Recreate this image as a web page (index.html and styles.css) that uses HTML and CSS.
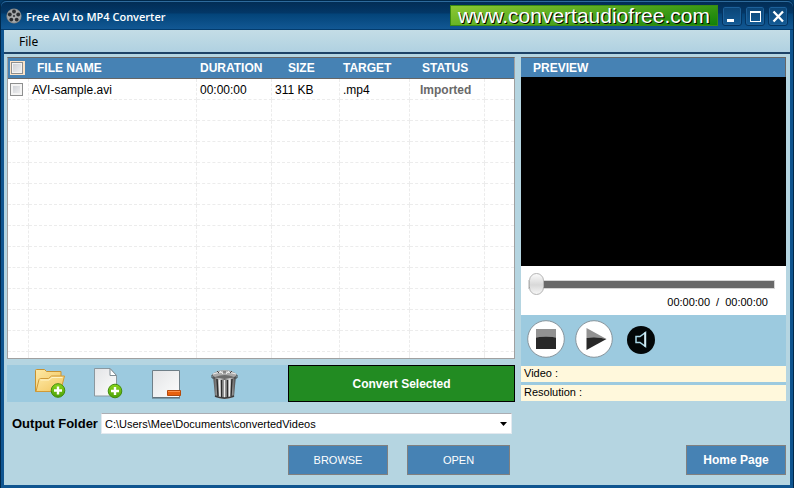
FILE: index.html
```html
<!DOCTYPE html>
<html lang="en">
<head>
<meta charset="UTF-8">
<meta name="viewport" content="width=device-width, initial-scale=1.0">
<title>Free AVI to MP4 Converter</title>
<link rel="stylesheet" href="styles.css">
</head>
<body>

<div class="window">
  <header class="titlebar">
    <svg class="reel" width="16" height="16" viewBox="0 0 16 16">
      <circle cx="8" cy="8" r="7.6" fill="#7f8284"/>
      <circle cx="8" cy="8" r="6.8" fill="#a5a8aa"/>
      <g fill="#2a2d30">
        <circle cx="8" cy="3.5" r="1.9"/>
        <circle cx="12.2" cy="6.5" r="1.9"/>
        <circle cx="10.7" cy="11.6" r="1.9"/>
        <circle cx="5.3" cy="11.6" r="1.9"/>
        <circle cx="3.8" cy="6.5" r="1.9"/>
        <circle cx="8" cy="8" r="1"/>
      </g>
    </svg>
    <h1 class="title">Free AVI to MP4 Converter</h1>
    <a class="site" href="#">www.convertaudiofree.com</a>
    <div class="window-buttons">
      <button type="button" aria-label="Minimize">
        <svg width="18" height="18" viewBox="0 0 18 18"><path d="M4 12h7v3H4z" fill="#fff"/></svg>
      </button>
      <button type="button" aria-label="Maximize">
        <svg width="18" height="18" viewBox="0 0 18 18"><path d="M4 4h11v11H4zM5 6v8h9V6z" fill="#fff" fill-rule="evenodd"/></svg>
      </button>
      <button type="button" aria-label="Close">
        <svg width="18" height="18" viewBox="0 0 18 18"><path d="M4.500 4.500l9.500 10M14 4.500l-9.500 10" stroke="#fff" stroke-width="2.300"/></svg>
      </button>
    </div>
  </header>

  <nav class="menubar">
    <button type="button">File</button>
  </nav>

  <main class="content">
    <section class="left">
      <div class="file-list">
        <table>
          <colgroup>
            <col class="col-check"><col class="col-name"><col class="col-duration"><col class="col-size"><col class="col-target"><col class="col-status"><col>
          </colgroup>
          <thead>
            <tr>
              <th><input type="checkbox" class="check-all" aria-label="Select all"></th>
              <th class="name-head">FILE NAME</th>
              <th>DURATION</th>
              <th class="size-head">SIZE</th>
              <th>TARGET</th>
              <th class="status-head">STATUS</th>
              <th></th>
            </tr>
          </thead>
          <tbody>
            <tr>
              <td><input type="checkbox" aria-label="AVI-sample.avi"></td>
              <td>AVI-sample.avi</td>
              <td>00:00:00</td>
              <td>311 KB</td>
              <td>.mp4</td>
              <td class="status">Imported</td>
              <td></td>
            </tr>
            <tr><td></td><td></td><td></td><td></td><td></td><td></td><td></td></tr>
            <tr><td></td><td></td><td></td><td></td><td></td><td></td><td></td></tr>
            <tr><td></td><td></td><td></td><td></td><td></td><td></td><td></td></tr>
            <tr><td></td><td></td><td></td><td></td><td></td><td></td><td></td></tr>
            <tr><td></td><td></td><td></td><td></td><td></td><td></td><td></td></tr>
            <tr><td></td><td></td><td></td><td></td><td></td><td></td><td></td></tr>
            <tr><td></td><td></td><td></td><td></td><td></td><td></td><td></td></tr>
            <tr><td></td><td></td><td></td><td></td><td></td><td></td><td></td></tr>
            <tr><td></td><td></td><td></td><td></td><td></td><td></td><td></td></tr>
            <tr><td></td><td></td><td></td><td></td><td></td><td></td><td></td></tr>
            <tr><td></td><td></td><td></td><td></td><td></td><td></td><td></td></tr>
            <tr><td></td><td></td><td></td><td></td><td></td><td></td><td></td></tr>
            <tr class="last"><td></td><td></td><td></td><td></td><td></td><td></td><td></td></tr>
          </tbody>
        </table>
      </div>

      <div class="toolbar">
        <div class="tools">
          <button type="button" aria-label="Add folder">
            <svg width="32" height="32" viewBox="0 0 32 32">
              <defs>
                <linearGradient id="folder" x1="0" y1="0" x2="1" y2="1">
                  <stop offset="0" stop-color="#fde9a5"/><stop offset="1" stop-color="#f2c45c"/>
                </linearGradient>
                <linearGradient id="plus" x1="0" y1="0" x2="0" y2="1">
                  <stop offset="0" stop-color="#8bd61c"/><stop offset="1" stop-color="#4ba008"/>
                </linearGradient>
                <linearGradient id="paper" x1="0" y1="0" x2="1" y2="1">
                  <stop offset="0" stop-color="#e3e4e6"/><stop offset="1" stop-color="#fdfdfd"/>
                </linearGradient>
              </defs>
              <path d="M1.500 23.500V2.500q0-1 1-1h8l2 2h14.500v20z" fill="url(#folder)" stroke="#c89231"/>
              <path d="M2 23.500l3-12q.5-1 1.500-1h8l3-2.500h13l-4 15.500z" fill="url(#folder)" stroke="#d09a38"/>
              <path d="M6.500 12h8.500l3-2.500h10.500" fill="none" stroke="#fff4c7"/>
              <circle cx="24" cy="22.500" r="6.800" fill="url(#plus)" stroke="#418c0d"/>
              <path d="M24 18.500v8M20 22.500h8" stroke="#fff" stroke-width="2.400"/>
            </svg>
          </button>
          <button type="button" aria-label="Add file">
            <svg width="32" height="32" viewBox="0 0 32 32">
              <path d="M2.500.5h15.500l6.500 7v20.500h-22z" fill="url(#paper)" stroke="#8b989f"/>
              <path d="M18 .5v7h6.500z" fill="#fff" stroke="#808d94"/>
              <circle cx="23" cy="23" r="6.800" fill="url(#plus)" stroke="#418c0d"/>
              <path d="M23 19v8M19 23h8" stroke="#fff" stroke-width="2.400"/>
            </svg>
          </button>
          <button type="button" aria-label="Remove file">
            <svg width="32" height="32" viewBox="0 0 32 32">
              <path d="M2.500 2.500h27v27h-27z" fill="url(#paper)" stroke="#6f7f88"/>
              <path d="M2 30h28" stroke="#596972"/>
              <path d="M17.500 22.500h13v5h-13z" fill="#e8600d" stroke="#b54a0c"/>
              <path d="M18 23.500h12" stroke="#ff9148"/>
            </svg>
          </button>
          <button type="button" aria-label="Clear list">
            <svg width="32" height="32" viewBox="0 0 32 32">
              <defs>
                <linearGradient id="metal" x1="0" y1="0" x2="1" y2="0">
                  <stop offset="0" stop-color="#4a4a4a"/><stop offset=".3" stop-color="#d0d0d0"/>
                  <stop offset=".5" stop-color="#707070"/><stop offset=".72" stop-color="#d6d6d6"/>
                  <stop offset="1" stop-color="#3c3c3c"/>
                </linearGradient>
              </defs>
              <path d="M5 7h23l-2 22q-9.500 4-19 0z" fill="url(#metal)"/>
              <path d="M9 11l1 17M13.500 12v18M19.500 12v18M24 11l-1 17" stroke="#2c2c2c" stroke-width="1.500"/>
              <path d="M11.500 12l.5 17M16.500 12v18M21.500 12v17" stroke="#efefef" stroke-width="1.300"/>
              <path d="M7 28q9.500 4 19 0" fill="none" stroke="#3c3c3c" stroke-width="1.500"/>
              <ellipse cx="16.500" cy="7" rx="12.500" ry="3.500" fill="#6d6d6d"/>
              <path d="M4 7q4-5 12.500-5T29 7l-3 2q-9-4-19 0z" fill="#aaa"/>
              <path d="M5 6q11-4 23 0M12 3l3 3M21 3l-3 3" fill="none" stroke="#ececec"/>
              <path d="M4 7v3h3M29 7v3h-3M9 3l2 2M24 3l-2 2M15 4h3" fill="none" stroke="#444"/>
            </svg>
          </button>
        </div>
        <button type="button" class="convert">Convert Selected</button>
      </div>

      <div class="output">
        <label for="folder-path">Output Folder</label>
        <select id="folder-path">
          <option>C:\Users\Mee\Documents\convertedVideos</option>
        </select>
      </div>

      <div class="folder-buttons">
        <button type="button" class="btn">BROWSE</button>
        <button type="button" class="btn">OPEN</button>
      </div>
    </section>

    <section class="right">
      <h2 class="preview-title">PREVIEW</h2>
      <div class="screen"></div>
      <div class="seek">
        <input type="range" min="0" max="100" value="0" aria-label="Position">
        <div class="times"><span>00:00:00</span><span>/</span><span>00:00:00</span></div>
      </div>
      <div class="controls">
        <button type="button" aria-label="Stop">
          <svg width="38" height="38" viewBox="0 0 38 38">
            <circle cx="19" cy="19" r="18.300" fill="#fff" stroke="#87949c"/>
            <path d="M9 9h20v8.500q-10-2-20 0z" fill="#929292"/>
            <path d="M9 17.500q10-2 20 0V29H9z" fill="#282828"/>
          </svg>
        </button>
        <button type="button" aria-label="Play">
          <svg width="38" height="38" viewBox="0 0 38 38">
            <circle cx="19" cy="19" r="18.300" fill="#fff" stroke="#87949c"/>
            <path d="M11.500 8v10q9-2 20 1z" fill="#929292"/>
            <path d="M11.500 18q9-2 20 1l-20 11z" fill="#282828"/>
          </svg>
        </button>
        <button type="button" class="mute" aria-label="Mute">
          <svg width="28" height="28" viewBox="0 0 28 28">
            <circle cx="14" cy="14" r="14" fill="#030708"/>
            <path d="M9 10.500h4l5.500-4v14l-5.500-4H9z" fill="none" stroke="#a9d8e8" stroke-width="1.500"/>
            <path d="M18 6.500v14" stroke="#e2f5fa" stroke-width="1.500"/>
          </svg>
        </button>
      </div>
      <p class="info">Video :</p>
      <p class="info">Resolution :</p>
      <button type="button" class="btn home">Home Page</button>
    </section>
  </main>
</div>

</body>
</html>
```
FILE: styles.css
```css
* {
  box-sizing: border-box;
}
body {
  margin: 0;
  background-color: #023a69;
  font-family: "Liberation Sans", Arial, sans-serif;
  font-size: 12px;
  color: #000;
}
button,
select {
  font-family: inherit;
  font-size: 11px;
}
button {
  padding: 0;
  border: none;
  background: none;
}
svg {
  display: block;
}
.window {
  min-height: 100vh;
  display: flex;
  flex-direction: column;
  border: 1px solid #00284a;
  border-radius: 6px 6px 0 0;
  background-color: #0f5590;
}

/* title bar */
.titlebar {
  height: 29px;
  display: flex;
  align-items: center;
  padding: 0 5px;
  border-top: 1px solid #2d6a9c;
  border-bottom: 1px solid #033c6e;
  border-radius: 6px 6px 0 0;
  background: linear-gradient(#022d55 0, #033767 11px, #034479 12px, #125894 27px);
}
.title {
  flex: 1;
  margin: 1px 0 0 4px;
  font-family: "Open Sans", sans-serif;
  font-size: 11px;
  font-weight: 600;
  color: #fff;
}
.site {
  height: 21px;
  margin-right: 4px;
  padding: 0 7px;
  border: 1px solid #3a8a12;
  background: linear-gradient(170deg, #8cc832, #45a018 60%, #128108);
  font-size: 21px;
  line-height: 19px;
  color: #fff;
  text-decoration: none;
  text-shadow: 1px 1px 0 #000;
}
.window-buttons {
  display: flex;
  gap: 3px;
}
.window-buttons button {
  width: 20px;
  height: 20px;
  border: 1px solid #043461;
  border-radius: 3px;
  background: linear-gradient(#0b4475, #135b96);
  box-shadow: inset 0 0 0 1px #1d6099;
}

.menubar {
  height: 24px;
  margin: 0 3px;
  padding: 3px 15px 0;
  border-bottom: 2px solid #1d4266;
  background: linear-gradient(#c4dde6, #b0d1e1);
}
.menubar button {
  font-family: "Noto Sans", sans-serif;
  font-size: 12px;
  line-height: 18px;
}

/* main area */
.content {
  flex: 1;
  display: grid;
  grid-template-columns: 508fr 265fr;
  gap: 6px;
  margin: 0 3px 3px;
  padding: 3px 4px 10px 3px;
  background-color: #b5d5e1;
}
.left,
.right {
  min-width: 0;
  display: flex;
  flex-direction: column;
}
.file-list {
  border: 1px solid #a0a0a0;
  border-top-color: #666;
  background-color: #fff;
}
table {
  width: 100%;
  table-layout: fixed;
  border-collapse: separate;
  border-spacing: 0;
}
.col-check {
  width: 21px;
}
.col-name {
  width: 168px;
}
.col-duration {
  width: 75px;
}
.col-size {
  width: 68px;
}
.col-target {
  width: 70px;
}
.col-status {
  width: 75px;
}
th {
  height: 21px;
  padding: 0 0 0 3px;
  border-bottom: 1px solid #666;
  background-color: #4682b4;
  color: #fff;
  text-align: left;
  white-space: nowrap;
}
th.name-head {
  padding-left: 8px;
}
th.size-head {
  padding-left: 16px;
}
th.status-head {
  padding-left: 12px;
}
td {
  height: 21px;
  padding: 2px 0 0 3px;
  border-right: 1px dashed #ececec;
  border-bottom: 1px dashed #ececec;
  white-space: nowrap;
}
td:last-child {
  border-right: none;
}
td.status {
  padding-left: 10px;
  font-weight: bold;
  color: #696969;
}
.last td {
  height: 6px;
  padding: 0;
  border-bottom: none;
}
th:first-child,
td:first-child {
  padding-top: 0;
  padding-left: 2px;
}
input[type="checkbox"] {
  appearance: none;
  display: block;
  width: 13px;
  height: 13px;
  margin: 0;
  border: 1px solid #8e8f8f;
  background: linear-gradient(135deg, #c6c9cf, #f6f6f6);
  box-shadow: inset 0 0 0 2px #f4f4f4;
}
input.check-all {
  width: 15px;
  height: 14px;
  border-color: #fbe3c8;
  border-right-width: 2px;
  box-shadow: inset 0 0 0 1px #8e8f8f, inset 0 0 0 2px #f4f4f4;
}

.toolbar {
  height: 37px;
  display: grid;
  grid-template-columns: 281fr 227fr;
  margin-top: 6px;
  background-color: #9ccadf;
}
.tools {
  display: flex;
  gap: 26px;
  padding: 3px 0 0 27px;
}
.tools button {
  height: 32px;
}
.convert {
  border: 1px solid #000;
  background-color: #228b22;
  color: #fff;
  font-size: 12px;
  font-weight: bold;
}

.output {
  display: flex;
  align-items: center;
  margin-top: 11px;
  padding: 0 3px 0 5px;
}
.output label {
  margin-right: 3px;
  font-size: 13px;
  font-weight: bold;
}
.output select {
  flex: 1;
  appearance: none;
  height: 21px;
  padding: 0 3px;
  border: 1px solid #e3e9ef;
  border-top-color: #abadb3;
  border-radius: 0;
  background: #fff url("data:image/svg+xml,%3Csvg xmlns='http://www.w3.org/2000/svg' width='7' height='4'%3E%3Cpath d='M0 0h7L3.500 4z'/%3E%3C/svg%3E") no-repeat right 4px center;
}
.folder-buttons {
  display: flex;
  justify-content: flex-end;
  gap: 19px;
  margin-top: 11px;
  padding-right: 5px;
}
.btn {
  width: 100px;
  height: 30px;
  border: 1px solid #808080;
  background-color: #4682b4;
  color: #fff;
}
.folder-buttons .btn:last-child {
  width: 103px;
}

/* preview */
.preview-title {
  height: 20px;
  margin: 0;
  padding-left: 12px;
  border-top: 1px solid #666;
  border-right: 1px solid #666;
  background-color: #4682b4;
  font-size: 12px;
  line-height: 20px;
  color: #fff;
}
.screen {
  height: 189px;
  background-color: #000;
}
.seek {
  height: 49px;
  padding: 7px 11px 0 7px;
  background-color: #fff;
}
.seek input {
  appearance: none;
  display: block;
  width: 100%;
  height: 22px;
  margin: 0;
  background: none;
}
.seek input::-webkit-slider-runnable-track {
  height: 9px;
  border: 1px solid #d6d6d6;
  background-color: #696969;
}
.seek input::-webkit-slider-thumb {
  appearance: none;
  width: 15px;
  height: 22px;
  margin-top: -8px;
  border: 1px solid #b5b5b5;
  border-radius: 8px;
  background: linear-gradient(#fafafa, #d8d8d8 55%, #f6f6f6);
}
.times {
  display: flex;
  justify-content: flex-end;
  gap: 6px;
  padding-right: 7px;
  font-size: 11px;
  line-height: 14px;
}
.controls {
  height: 51px;
  display: flex;
  align-items: flex-start;
  gap: 10px;
  padding: 5px 6px;
  background-color: #9ccadf;
}
.controls .mute {
  margin: 6px 0 0 4px;
}
.info {
  height: 16px;
  margin: 0;
  padding-left: 3px;
  background-color: #fff8dc;
  font-size: 11px;
  line-height: 14px;
}
.info + .info {
  height: 19px;
  border-top: 3px solid #9ccadf;
}
.home {
  align-self: flex-end;
  margin-top: auto;
  font-size: 12px;
  font-weight: bold;
}
```
